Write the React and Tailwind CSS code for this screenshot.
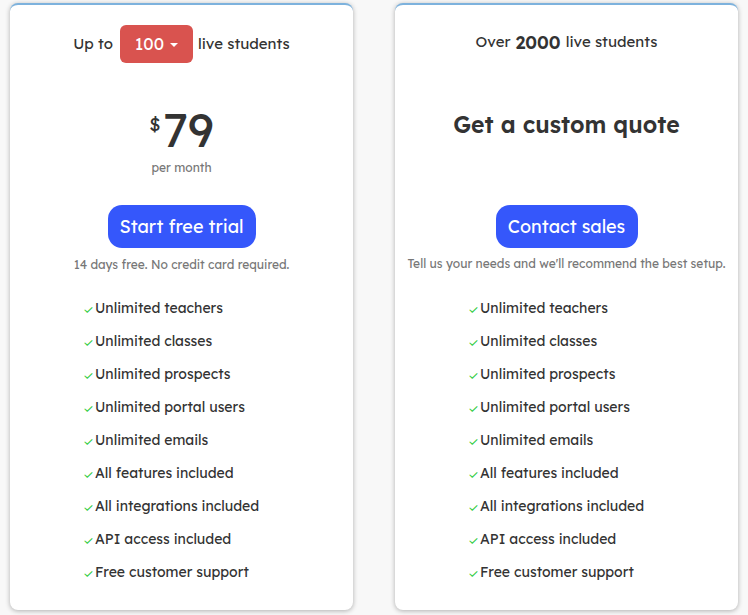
import React from 'react';

const features = [
  'Unlimited teachers',
  'Unlimited classes',
  'Unlimited prospects',
  'Unlimited portal users',
  'Unlimited emails',
  'All features included',
  'All integrations included',
  'API access included',
  'Free customer support',
];

const FeatureList = ({ top }) => (
  <ul className={`${top} pl-[73px] flex flex-col gap-[13px]`}>
    {features.map((f) => (
      <li key={f} className="flex items-center h-[20px] text-[14px] text-[#333]">
        <span className="text-[12px] text-[#2ecc40] w-[12px] mt-[3px]">✓</span>
        <span>{f}</span>
      </li>
    ))}
  </ul>
);

const Card = ({ children }) => (
  <div className="w-[343px] h-[607px] bg-white rounded-lg border-t-2 border-[#7db2dd] shadow-[0_1px_5px_rgba(0,0,0,0.3)] flex flex-col">
    {children}
  </div>
);

export default function App() {
  return (
    <div
      className="w-[748px] h-[615px] bg-[#f8f8f8] flex gap-[42px] px-[10px] pt-[3px]"
      style={{ fontFamily: 'Lexend, "Noto Sans", Inter, sans-serif' }}
    >
      {/* Left card - priced plan */}
      <Card>
        <div className="flex items-center justify-center mt-[20px] h-[38px] text-[15px] text-[#333]">
          <span>Up to</span>
          <button className="ml-[7px] mr-[5px] w-[73px] h-[38px] bg-[#d9534f] rounded-md text-white text-[17px] flex items-center justify-center gap-[6px]">
            100
            <span className="inline-block w-0 h-0 border-l-[4px] border-r-[4px] border-t-[4px] border-l-transparent border-r-transparent border-t-white mt-[2px]" />
          </button>
          <span>live students</span>
        </div>
        <div className="flex justify-center items-start mt-[42px] text-[#333]">
          <span className="text-[18px] mt-[6px] mr-[2px]">$</span>
          <span className="text-[47px] leading-[50px]">79</span>
        </div>
        <div className="text-center text-[12px] text-[#777] mt-[4px]">per month</div>
        <div className="flex justify-center mt-[28px]">
          <button className="w-[148px] h-[43px] bg-[#3557fb] rounded-[14px] text-white text-[18px]">
            Start free trial
          </button>
        </div>
        <div className="text-center text-[12px] text-[#777] mt-[8px]">
          14 days free. No credit card required.
        </div>
        <FeatureList top="mt-[24px]" />
      </Card>

      {/* Right card - custom quote */}
      <Card>
        <div className="flex items-center justify-center mt-[25px] h-[24px] text-[15px] text-[#333] gap-[5px]">
          <span>Over</span>
          <span className="text-[18px] font-semibold">2000</span>
          <span>live students</span>
        </div>
        <div className="text-center mt-[50px] text-[23px] font-semibold text-[#333] h-[42px] leading-[42px]">
          Get a custom quote
        </div>
        <div className="flex justify-center mt-[59px]">
          <button className="w-[142px] h-[43px] bg-[#3557fb] rounded-[14px] text-white text-[18px]">
            Contact sales
          </button>
        </div>
        <div className="text-center text-[12px] text-[#777] mt-[7px]">
          Tell us your needs and we'll recommend the best setup.
        </div>
        <FeatureList top="mt-[25px]" />
      </Card>
    </div>
  );
}
